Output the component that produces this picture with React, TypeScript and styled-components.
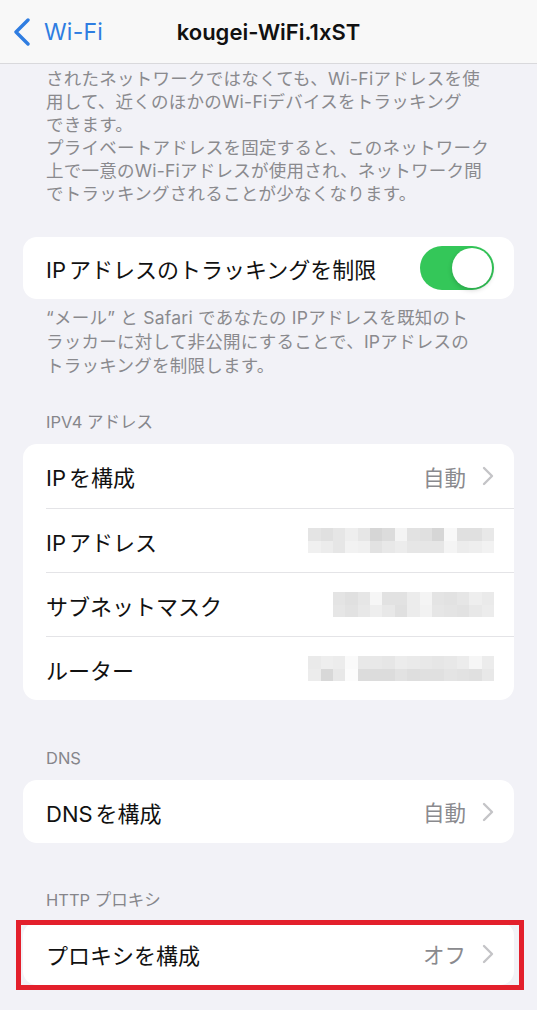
import React from "react";
import styled, { createGlobalStyle } from "styled-components";

const GlobalStyle = createGlobalStyle`
  * { box-sizing: border-box; }
  body {
    margin: 0;
    background: #f2f2f7;
    font-family: Inter, "Noto Sans CJK JP", "Noto Sans", sans-serif;
    -webkit-font-smoothing: antialiased;
  }
`;

const Page = styled.div`
  width: 537px;
  height: 1010px;
  overflow: hidden;
  background: #f2f2f7;
`;

const NavBar = styled.header`
  height: 64px;
  display: grid;
  grid-template-columns: 1fr auto 1fr;
  align-items: center;
  background: #f8f8f8;
  border-bottom: 1px solid #d9d9dc;
`;

const BackButton = styled.div`
  display: flex;
  align-items: center;
  gap: 13px;
  padding-left: 13px;
  color: #2f7de1;
  font-size: 23px;
  letter-spacing: 0.2px;
`;

const Title = styled.div`
  font-size: 22px;
  font-weight: 600;
  color: #111;
`;

const Note = styled.p<{ $top?: number; $lh?: number }>`
  margin: ${(p) => p.$top ?? 0}px 0 0;
  padding: 0 20px 0 46px;
  font-size: 17.5px;
  letter-spacing: 0.25px;
  line-height: ${(p) => p.$lh ?? 23}px;
  color: #8a8a8e;
  white-space: nowrap;
`;

const SectionHeader = styled.div<{ $top: number }>`
  margin: ${(p) => p.$top}px 0 12px;
  padding-left: 46px;
  height: 20px;
  line-height: 20px;
  font-size: 16.5px;
  color: #86868b;
`;

const Card = styled.div<{ $top?: number }>`
  margin: ${(p) => p.$top ?? 0}px 23px 0;
  background: #fff;
  border-radius: 14px;
  overflow: hidden;
`;

const Row = styled.div<{ $h?: number }>`
  display: flex;
  align-items: center;
  height: ${(p) => p.$h ?? 64}px;
  margin-left: 23px;
  padding-right: 20px;
  font-size: 22px;
  color: #111;

  & + & {
    border-top: 1px solid #e4e4e7;
    height: ${(p) => (p.$h ?? 64) + 1}px;
  }
`;

const Label = styled.span`
  flex: 1;
`;

const Gap = styled.span`
  margin-right: 3px;
`;

const Value = styled.span`
  display: flex;
  align-items: center;
  gap: 16px;
  color: #8a8a8e;
  font-size: 21.5px;
`;

const Switch = styled.div`
  width: 74px;
  height: 44px;
  border-radius: 22px;
  background: #34c759;
  padding: 2px;
  display: flex;
  justify-content: flex-end;
`;

const Knob = styled.div`
  width: 40px;
  height: 40px;
  border-radius: 50%;
  background: #fff;
  box-shadow: 0 2px 5px rgba(0, 0, 0, 0.18);
`;

const Mosaic = styled.div<{ $cols: number }>`
  display: grid;
  grid-template-columns: repeat(${(p) => p.$cols}, 12.4px);
  grid-auto-rows: 12.5px;
`;

const Cell = styled.div``;

const Highlight = styled.div`
  position: relative;
  &::after {
    content: "";
    position: absolute;
    left: 16px;
    right: 13px;
    top: -2px;
    bottom: -5px;
    border: 5px solid #e3202c;
    pointer-events: none;
  }
`;

const BackChevron = () => (
  <svg width="18" height="28" viewBox="0 0 18 28">
    <polyline
      points="15,2 3,14 15,26"
      fill="none"
      stroke="#2f7de1"
      strokeWidth="3.4"
      strokeLinecap="round"
      strokeLinejoin="round"
    />
  </svg>
);

const Disclosure = () => (
  <svg width="12" height="20" viewBox="0 0 12 20">
    <polyline
      points="2,2 10,10 2,18"
      fill="none"
      stroke="#c4c4c7"
      strokeWidth="2.4"
      strokeLinecap="round"
      strokeLinejoin="round"
    />
  </svg>
);

const Blur = ({ rows }: { rows: number[][] }) => (
  <Mosaic $cols={rows[0].length}>
    {rows.flat().map((v, i) => (
      <Cell key={i} style={{ background: `rgb(${v},${v},${v})` }} />
    ))}
  </Mosaic>
);

const h = (s: string) => s.split(" ").map((x) => parseInt(x, 16));

const ipBlur = [
  h("e4 e0 e6 ee e6 d6 dc f4 e2 e0 d6 f8 e0 e0 e8"),
  h("f0 ec e6 f2 f0 e2 e8 ec e6 e6 e6 f4 ec ee f2"),
];
const maskBlur = [
  h("e4 e0 e6 f6 e2 e2 ec f4 e4 e2 e6 ee ea"),
  h("e6 e2 e8 ee e8 e0 ec f2 e6 e4 e2 e8 ec"),
];
const routerBlur = [
  h("ea ee ec fa e8 e8 e6 ec ea e8 e6 e8 ec f6 ec"),
  h("ec d8 e8 fc dc dc dc e2 de e0 e0 e4 e2 e0 e8"),
];

export default function App() {
  return (
    <Page>
      <GlobalStyle />
      <NavBar>
        <BackButton>
          <BackChevron />
          Wi-Fi
        </BackButton>
        <Title>kougei-WiFi.1xST</Title>
        <div />
      </NavBar>

      <Note $top={3}>
        されたネットワークではなくても、Wi-Fiアドレスを使
        <br />
        用して、近くのほかのWi-Fiデバイスをトラッキング
        <br />
        できます。
        <br />
        プライベートアドレスを固定すると、このネットワーク
        <br />
        上で一意のWi-Fiアドレスが使用され、ネットワーク間
        <br />
        でトラッキングされることが少なくなります。
      </Note>

      <Card $top={32}>
        <Row $h={62}>
          <Label>
            <Gap>IP</Gap>アドレスのトラッキングを制限
          </Label>
          <Switch>
            <Knob />
          </Switch>
        </Row>
      </Card>

      <Note $top={7} $lh={24}>
        “メール” と Safari であなたの IPアドレスを既知のト
        <br />
        ラッカーに対して非公開にすることで、IPアドレスの
        <br />
        トラッキングを制限します。
      </Note>

      <SectionHeader $top={34}>IPV4 アドレス</SectionHeader>
      <Card>
        <Row>
          <Label>
            <Gap>IP</Gap>を構成
          </Label>
          <Value>
            自動
            <Disclosure />
          </Value>
        </Row>
        <Row>
          <Label>
            <Gap>IP</Gap>アドレス
          </Label>
          <Blur rows={ipBlur} />
        </Row>
        <Row>
          <Label>サブネットマスク</Label>
          <Blur rows={maskBlur} />
        </Row>
        <Row>
          <Label>ルーター</Label>
          <Blur rows={routerBlur} />
        </Row>
      </Card>

      <SectionHeader $top={48}>DNS</SectionHeader>
      <Card>
        <Row $h={63}>
          <Label>
            <Gap>DNS</Gap>を構成
          </Label>
          <Value>
            自動
            <Disclosure />
          </Value>
        </Row>
      </Card>

      <SectionHeader $top={47}>HTTP プロキシ</SectionHeader>
      <Highlight>
        <Card>
          <Row $h={63}>
            <Label>プロキシを構成</Label>
            <Value>
              オフ
              <Disclosure />
            </Value>
          </Row>
        </Card>
      </Highlight>
    </Page>
  );
}
